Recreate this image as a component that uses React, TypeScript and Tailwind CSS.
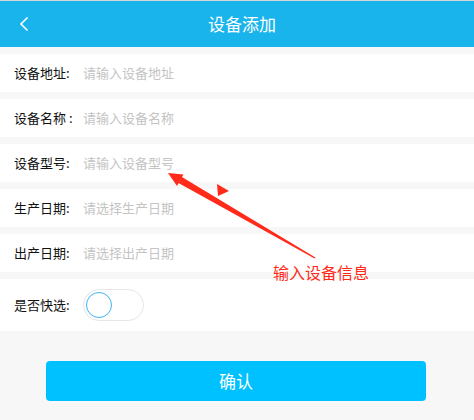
import React from 'react'

const font = { fontFamily: '"Noto Sans CJK SC", "Liberation Sans", sans-serif' }

function Row({ label, placeholder }: { label: string; placeholder: string }) {
  return (
    <div className="mt-[7px] flex h-[38px] items-center bg-white pl-[14px] text-[13px]">
      <span className="w-[69px] shrink-0 text-[#111]">{label}</span>
      <span className="text-[#c4c4c4]">{placeholder}</span>
    </div>
  )
}

export default function App() {
  const rows = [
    { label: '设备地址:', placeholder: '请输入设备地址' },
    { label: '设备名称 :', placeholder: '请输入设备名称' },
    { label: '设备型号:', placeholder: '请输入设备型号' },
    { label: '生产日期:', placeholder: '请选择生产日期' },
    { label: '出产日期:', placeholder: '请选择出产日期' },
  ]

  return (
    <div className="relative h-[420px] w-[474px] overflow-hidden bg-[#f7f7f7]" style={font}>
      {/* header */}
      <div className="flex h-[47px] items-center border-t border-[#d6d6d6] bg-[#1ab4ec] text-white">
        <div className="flex w-[46px] items-center pl-[19px]">
          <svg width="10" height="16" viewBox="0 0 10 16" fill="none">
            <path d="M8.5 1.5 L2 8 L8.5 14.5" stroke="white" strokeWidth="1.6" />
          </svg>
        </div>
        <div className="flex-1 text-center text-[17px]">设备添加</div>
        <div className="w-[36px]" />
      </div>

      {rows.map((r) => (
        <Row key={r.label} label={r.label} placeholder={r.placeholder} />
      ))}

      <div className="mt-[7px] flex h-[52px] items-center bg-white pl-[14px] text-[13px]">
        <span className="w-[69px] shrink-0 text-[#111]">是否快选:</span>
        <div className="flex h-[32px] w-[61px] items-center rounded-full border border-[#e6e6e6] bg-white pl-[2px]">
          <div className="h-[26px] w-[26px] rounded-full border border-[#3fb2f3] bg-white" />
        </div>
      </div>

      <button className="mx-[46px] mt-[30px] flex h-[40px] w-[380px] items-center justify-center rounded-[4px] bg-[#00c1ff] text-[17px] text-white">
        确认
      </button>

      {/* annotation overlay */}
      <svg className="pointer-events-none absolute left-0 top-0" width="474" height="420">
        <polygon points="168,173 183.5,174.5 177,186" fill="#ff2a1a" />
        <polygon points="178.5,183 181.5,176.8 315.4,257.5 314.6,258.5" fill="#ff2a1a" />
        <polygon points="217,184 229,191 218,196" fill="#ff2a1a" />
      </svg>
      <div className="absolute left-[273px] top-[260px] text-[16px] text-[#ff2a1a]">输入设备信息</div>
    </div>
  )
}
